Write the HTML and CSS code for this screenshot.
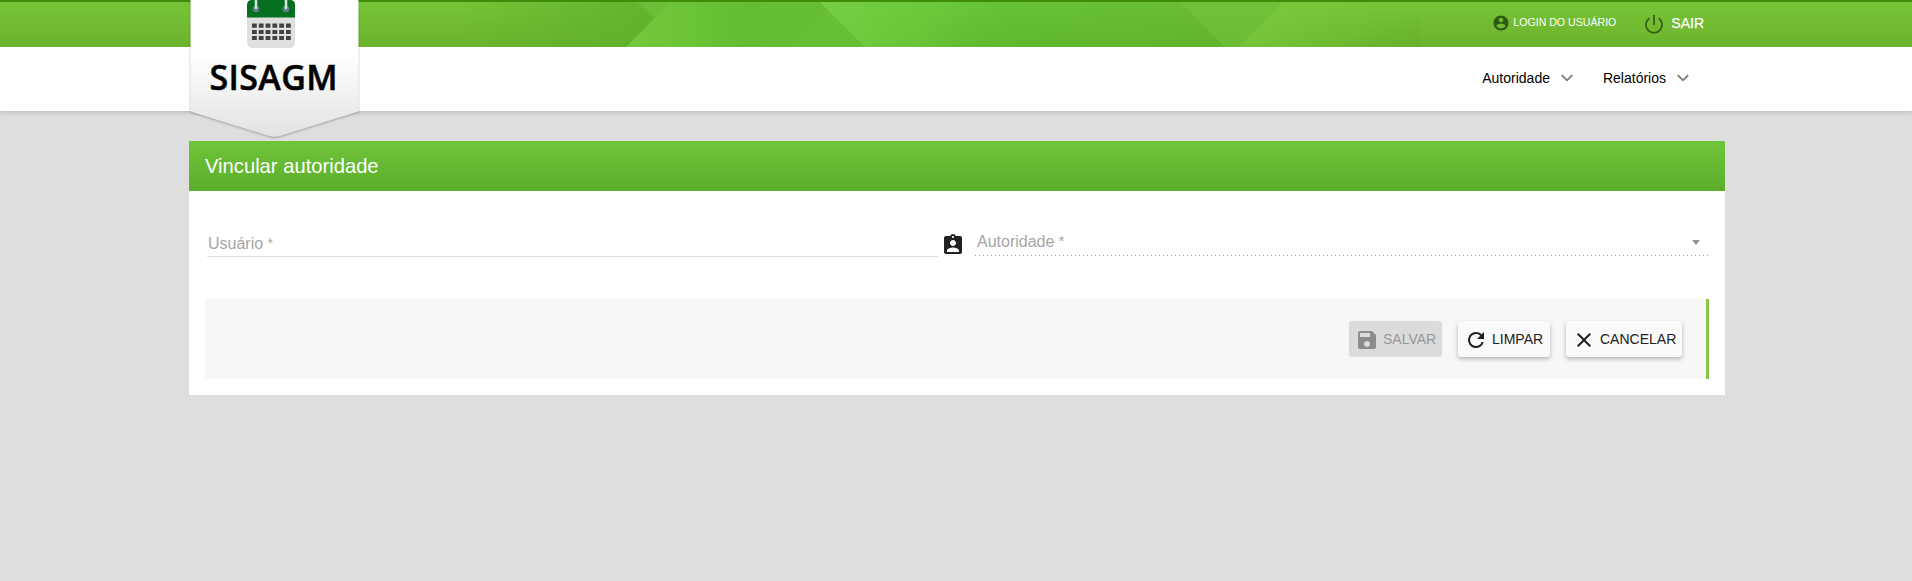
FILE: index.html
```html
<!DOCTYPE html>
<html lang="pt-BR">
<head>
<meta charset="utf-8">
<title>SISAGM</title>
<link rel="stylesheet" href="styles.css">
</head>
<body>
<header class="header">
  <div class="topbar">
    <svg class="topbar-art" width="960" height="47" viewBox="460 0 960 47">
      <defs>
        <linearGradient id="a" x1="0" y1="0" x2="1" y2="0"><stop offset="0" stop-color="#5aae2b" stop-opacity="0"/><stop offset="1" stop-color="#5ab02c" stop-opacity=".85"/></linearGradient>
        <linearGradient id="b" x1="0" y1="0" x2="1" y2="0"><stop offset="0" stop-color="#73c93c"/><stop offset=".6" stop-color="#64bd31"/><stop offset="1" stop-color="#66bd34"/></linearGradient>
        <linearGradient id="c" x1="0" y1="0" x2="1" y2=".1"><stop offset="0" stop-color="#74cf42"/><stop offset=".3" stop-color="#6dc93b"/><stop offset=".45" stop-color="#68c438"/><stop offset="1" stop-color="#6abd34"/></linearGradient>
        <linearGradient id="d" x1="0" y1="0" x2="1" y2="0"><stop offset="0" stop-color="#7cca3f"/><stop offset="1" stop-color="#7cca3f" stop-opacity="0"/></linearGradient>
        <linearGradient id="s" x1="0" y1="0" x2="0" y2="1"><stop offset="0" stop-color="#4a9d1a" stop-opacity="0"/><stop offset="1" stop-color="#4a9d1a" stop-opacity=".28"/></linearGradient>
        <linearGradient id="f" x1="0" y1="0" x2="1" y2="0"><stop offset="0" stop-color="#fff" stop-opacity="0"/><stop offset=".4" stop-color="#fff"/></linearGradient>
        <mask id="m"><path fill="url(#f)" d="M860 0h400v47H860z"/></mask>
      </defs>
      <path fill="url(#a)" d="M460 0h213l-47 47H460z"/>
      <path fill="#6bbf38" d="M634 0h39l-18 18z"/>
      <path fill="url(#b)" d="M673 0h145l10 10-36 37H626z"/>
      <path fill="#66bf35" d="M828 10l37 37h-73z"/>
      <path fill="url(#c)" d="M818 0h360l47 47H865z"/>
      <path fill="url(#s)" mask="url(#m)" d="M860 0h318l47 47H865z"/>
      <path fill="#71c23a" d="M1178 0h107l-47 47h-13z"/>
      <path fill="url(#d)" d="M1285 0h135v47h-182z"/>
      <path fill="url(#s)" d="M1178 0h242v47h-195z" opacity=".5"/>
    </svg>
    <div class="user-links">
      <a class="user">
        <svg width="18" height="18" viewBox="0 0 24 24"><path fill="#2f5a12" d="M12 2C6.480 2 2 6.480 2 12s4.480 10 10 10 10-4.480 10-10S17.520 2 12 2zm0 3c1.660 0 3 1.340 3 3s-1.340 3-3 3-3-1.340-3-3 1.340-3 3-3zm0 14.200c-2.500 0-4.710-1.280-6-3.220.030-1.990 4-3.080 6-3.080 1.990 0 5.970 1.090 6 3.080-1.290 1.940-3.500 3.220-6 3.220z"/></svg>
        <span>LOGIN DO USUÁRIO</span>
      </a>
      <a class="exit">
        <svg width="20" height="20" viewBox="0 0 20 20" fill="none" stroke="#385f17" stroke-width="1.800"><path d="M10 1v10M5.300 4.200a8.100 8.100 0 1 0 9.400 0"/></svg>
        <span>SAIR</span>
      </a>
    </div>
  </div>
  <nav class="nav">
    <a>Autoridade <svg width="12" height="8" viewBox="0 0 12 8"><path d="M.8 1.200 6 6.300l5.200-5.100"/></svg></a>
    <a>Relatórios <svg width="12" height="8" viewBox="0 0 12 8"><path d="M.8 1.200 6 6.300l5.200-5.100"/></svg></a>
  </nav>
  <svg class="logo" width="180" height="146" viewBox="185 0 180 146">
    <defs>
      <linearGradient id="l" x1="0" y1="0" x2="0" y2="1"><stop offset=".42" stop-color="#fff"/><stop offset="1" stop-color="#e2e2e2"/></linearGradient>
    </defs>
    <path class="ribbon" fill="url(#l)" d="M190.500 -5H358.500V111.500L280 136q-5.500 1.500-11 0L190.500 111.500z"/>
    <rect x="247" y="0" width="48" height="48" rx="5.500" fill="#e0e0e0"/>
    <path fill="#04701f" d="M247 17.500V5q0-5 5-5h38q5 0 5 5v12.500z"/>
    <circle cx="256" cy="9" r="3.300" fill="#607d8b"/><circle cx="286" cy="9" r="3.300" fill="#607d8b"/>
    <path stroke="#d8e6e2" stroke-width="2.500" stroke-linecap="round" d="M256 -2V8M286 -2V8"/>
    <path stroke="#424242" stroke-width="4.200" stroke-dasharray="4.800 2" d="M252 25.700h39M252 32h39M252 38h39"/>
    <text class="brand" x="209.500" y="89.500" textLength="128">SISAGM</text>
  </svg>
</header>
<main class="card">
  <h1 class="card-title">Vincular autoridade</h1>
  <div class="fields">
    <div class="field user-field">Usuário <span class="req">*</span></div>
    <svg class="badge" width="24" height="24" viewBox="0 0 24 24"><path fill="#212121" d="M19 3h-4.180C14.400 1.840 13.300 1 12 1s-2.400.84-2.820 2H5c-1.100 0-2 .9-2 2v14c0 1.100.9 2 2 2h14c1.100 0 2-.9 2-2V5c0-1.100-.9-2-2-2zm-7 0c.55 0 1 .45 1 1s-.45 1-1 1-1-.45-1-1 .45-1 1-1zm0 4c1.660 0 3 1.340 3 3s-1.340 3-3 3-3-1.340-3-3 1.340-3 3-3zm6 12H6v-1.400c0-2 4-3.100 6-3.100s6 1.100 6 3.100V19z"/></svg>
    <div class="field select-field"><span>Autoridade <span class="req">*</span></span><i class="caret"></i></div>
  </div>
  <div class="actions">
    <button class="btn save" disabled><svg width="24" height="24" viewBox="0 0 24 24"><path d="M17 3H5a2 2 0 0 0-2 2v14c0 1.100.89 2 2 2h14c1.100 0 2-.9 2-2V7l-4-4zm-5 16c-1.660 0-3-1.340-3-3s1.340-3 3-3 3 1.340 3 3-1.340 3-3 3zm3-10H5V5h10v4z"/></svg>SALVAR</button>
    <button class="btn clear"><svg width="24" height="24" viewBox="0 0 24 24"><path d="M17.650 6.350A7.958 7.958 0 0 0 12 4a8 8 0 1 0 7.730 10h-2.080A6 6 0 1 1 12 6c1.660 0 3.140.69 4.220 1.780L13 11h7V4l-2.350 2.350z"/></svg>LIMPAR</button>
    <button class="btn cancel"><svg width="24" height="24" viewBox="0 0 24 24"><path d="M19 6.410 17.590 5 12 10.590 6.410 5 5 6.410 10.590 12 5 17.590 6.410 19 12 13.410 17.590 19 19 17.590 13.410 12z"/></svg>CANCELAR</button>
  </div>
</main>
</body>
</html>
```
FILE: styles.css
```css
* { box-sizing: border-box; }
body {
  margin: 0;
  min-height: 581px;
  background: #dedede;
  font-family: "Liberation Sans", Arial, sans-serif;
  color: #212121;
}
.header {
  position: relative;
  height: 111px;
  background: #fff;
  box-shadow: 0 1px 5px rgba(0, 0, 0, .18);
}
.topbar {
  position: relative;
  height: 47px;
  background: linear-gradient(#78c437, #6cb32d);
}
.topbar::after {
  content: "";
  position: absolute;
  inset: 0 0 auto;
  height: 2px;
  background: #3f8c0a;
}
.topbar-art { position: absolute; left: 460px; top: 0; }
.user-links {
  position: relative;
  display: flex;
  justify-content: flex-end;
  align-items: center;
  height: 47px;
  padding-right: 208px;
  color: #fff;
}
.user, .exit { display: flex; align-items: center; }
.user svg { flex: none; }
.user { gap: 3px; font-size: 10.600px; margin-right: 28px; width: 124px; white-space: nowrap; }
.user span { margin-top: -3px; }
.user svg { margin-top: -2px; }
.exit { gap: 7px; font-size: 14px; -webkit-text-stroke: .25px #fff; }
.exit span { margin-top: -1px; }
.nav {
  display: flex;
  justify-content: flex-end;
  align-items: center;
  gap: 30px;
  height: 64px;
  padding: 0 223px 2px 0;
  font-size: 14px;
  color: #000;
}
.nav a { display: flex; align-items: center; gap: 11px; }
.nav path { fill: none; stroke: #777; stroke-width: 1.8; }
.logo { position: absolute; left: 185px; top: 0; }
.ribbon { filter: drop-shadow(0 1px 1px rgba(0, 0, 0, .28)); }
.brand { font: 600 34px "Open Sans", "Noto Sans", sans-serif; fill: #000; stroke: #000; stroke-width: .5px; }

.card { width: 1536px; height: 254px; margin: 30px 0 0 189px; background: #fff; }
.card-title {
  height: 50px;
  margin: 0;
  padding-left: 16px;
  font-size: 20.200px;
  font-weight: 400;
  line-height: 50px;
  color: #fff;
  background: linear-gradient(#6fc53a, #5cad2b);
}
.fields { display: flex; height: 108px; padding: 34px 16px 0 18px; font-size: 16px; color: #a6a6a6; }
.user-field {
  width: 731px;
  height: 32px;
  padding: 10px 0 0 1px;
  border-bottom: 1px solid #e0e0e0;
}
.req { font-size: 14px; vertical-align: 1px; }
.badge { margin: 8px 10px 0 3px; }
.select-field {
  display: flex;
  justify-content: space-between;
  width: 734px;
  height: 31px;
  padding: 8px 8px 0 2px;
  background: linear-gradient(to right, #999 25%, transparent 0) 0 100% / 4px 1px repeat-x;
}
.caret {
  width: 0;
  height: 0;
  margin: 7px 1px 0 0;
  border: 4.5px solid transparent;
  border-top: 5px solid #949494;
  border-bottom: 0;
}
.actions {
  display: flex;
  justify-content: flex-end;
  align-items: center;
  gap: 16px;
  height: 80px;
  margin: 0 16px;
  padding-right: 24px;
  background: #f7f7f7;
  border-right: 3px solid #8bc34a;
}
.btn {
  display: flex;
  align-items: center;
  gap: 4px;
  height: 36px;
  padding: 0 0 0 6px;
  border: 0;
  border-radius: 3px;
  background: #fafafa;
  color: #212121;
  font: 14px "Liberation Sans", Arial, sans-serif;
  box-shadow: 0 2px 4px rgba(0, 0, 0, .28);
}
.btn svg { fill: currentColor; margin-top: 2px; flex: none; }
.save { width: 93px; background: #dbdbdb; color: #979797; box-shadow: none; }
.save svg { fill: #8c8c8c; }
.clear { width: 92px; }
.cancel { width: 116px; }
```
